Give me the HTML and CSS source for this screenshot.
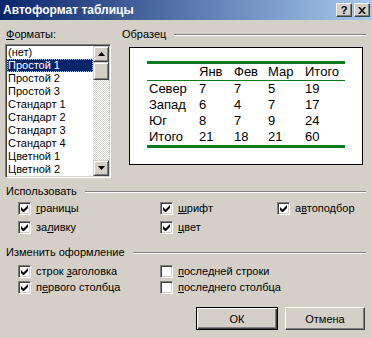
FILE: index.html
```html
<!DOCTYPE html>
<html lang="ru">
<head>
    <meta charset="UTF-8" />
    <title>Автоформат таблицы</title>
    <link rel="stylesheet" href="styles.css">
</head>
<body>
    <div class="dialog">
        <div class="titlebar">
            <span class="title">Автоформат таблицы</span>
            <span class="tb-buttons">
                <span class="tb-btn">?</span>
                <span class="tb-btn">
                    <svg width="8" height="7" viewBox="0 0 8 7"><path d="M0 0h2l2 2.5L6 0h2L5 3.5 8 7H6L4 4.5 2 7H0l3-3.5z" fill="#000"/></svg>
                </span>
            </span>
        </div>

        <div class="content">
            <div class="top">
                <div class="formats">
                    <div class="label"><u>Ф</u>орматы:</div>
                    <div class="listbox">
                        <ul class="items">
                            <li>(нет)</li>
                            <li class="selected">Простой 1</li>
                            <li>Простой 2</li>
                            <li>Простой 3</li>
                            <li>Стандарт 1</li>
                            <li>Стандарт 2</li>
                            <li>Стандарт 3</li>
                            <li>Стандарт 4</li>
                            <li>Цветной 1</li>
                            <li>Цветной 2</li>
                        </ul>
                        <div class="scrollbar">
                            <div class="sb-btn">
                                <svg width="7" height="4" viewBox="0 0 7 4"><path d="M3.5 0L7 4H0z" fill="#000"/></svg>
                            </div>
                            <div class="sb-btn sb-thumb"></div>
                            <div class="sb-track"></div>
                            <div class="sb-btn">
                                <svg width="7" height="4" viewBox="0 0 7 4"><path d="M0 0h7L3.5 4z" fill="#000"/></svg>
                            </div>
                        </div>
                    </div>
                </div>

                <div class="sample">
                    <div class="group-head">Образец</div>
                    <div class="preview">
                        <table class="demo">
                            <tr class="head"><td></td><td>Янв</td><td>Фев</td><td>Мар</td><td>Итого</td></tr>
                            <tr><td>Север</td><td>7</td><td>7</td><td>5</td><td>19</td></tr>
                            <tr><td>Запад</td><td>6</td><td>4</td><td>7</td><td>17</td></tr>
                            <tr><td>Юг</td><td>8</td><td>7</td><td>9</td><td>24</td></tr>
                            <tr class="last"><td>Итого</td><td>21</td><td>18</td><td>21</td><td>60</td></tr>
                        </table>
                    </div>
                </div>
            </div>

            <div class="group">
                <div class="group-head">Использовать</div>
                <div class="checks use">
                    <label class="check"><span class="box on"></span><span><u>г</u>раницы</span></label>
                    <label class="check"><span class="box on"></span><span><u>ш</u>рифт</span></label>
                    <label class="check"><span class="box on"></span><span>а<u>в</u>топодбор</span></label>
                    <label class="check"><span class="box on"></span><span>за<u>л</u>ивку</span></label>
                    <label class="check"><span class="box on"></span><span><u>ц</u>вет</span></label>
                </div>
            </div>

            <div class="group second">
                <div class="group-head">Изменить оформление</div>
                <div class="checks change">
                    <label class="check"><span class="box on"></span><span>строк <u>з</u>аголовка</span></label>
                    <label class="check"><span class="box"></span><span><u>п</u>оследней строки</span></label>
                    <label class="check"><span class="box on"></span><span>п<u>е</u>рвого столбца</span></label>
                    <label class="check"><span class="box"></span><span><u>п</u>оследнего столбца</span></label>
                </div>
            </div>

            <div class="actions">
                <button class="btn default">ОК</button>
                <button class="btn">Отмена</button>
            </div>
        </div>
    </div>
</body>
</html>
```

FILE: styles.css
```css
body {
    margin: 0;
    padding: 0;
    background: #d4d0c8;
    font-family: "Liberation Sans", Arial, sans-serif;
    font-size: 11px;
    color: #000;
}

.dialog {
    width: 372px;
    height: 338px;
    overflow: hidden;
}

.titlebar {
    height: 20px;
    display: flex;
    align-items: center;
    justify-content: space-between;
    padding: 0 2px 0 3px;
    background: linear-gradient(to right, #0a246a, #a6caf0);
}

.title {
    color: #fff;
    font-weight: bold;
    font-size: 12px;
}

.tb-buttons {
    display: flex;
    gap: 2px;
}

.tb-btn {
    width: 14px;
    height: 12px;
    display: flex;
    align-items: center;
    justify-content: center;
    background: #d4d0c8;
    border: 1px solid;
    border-color: #fff #404040 #404040 #fff;
    box-shadow: inset -1px -1px #808080;
    font-weight: bold;
    font-size: 11px;
    line-height: 12px;
}

.content {
    padding: 8px 6px 0 5px;
}

.top {
    display: flex;
}

.label {
    padding-left: 1px;
    line-height: 13px;
}

.formats {
    width: 106px;
}

.listbox {
    margin-top: 3px;
    display: flex;
    background: #fff;
    border: 1px solid;
    border-color: #808080 #fff #fff #808080;
    box-shadow: inset 1px 1px #404040, inset -1px -1px #d4d0c8;
    padding: 1px;
}

.items {
    list-style: none;
    margin: 0;
    padding: 0;
    flex: 1;
}

.items li {
    height: 13px;
    line-height: 13px;
    padding-left: 1px;
    white-space: nowrap;
}

.items li.selected {
    background: #0a246a;
    color: #fff;
    outline: 1px dotted #a6caf0;
    outline-offset: -1px;
}

.scrollbar {
    width: 16px;
    display: flex;
    flex-direction: column;
}

.sb-btn {
    height: 14px;
    display: flex;
    align-items: center;
    justify-content: center;
    background: #d4d0c8;
    border: 1px solid;
    border-color: #d4d0c8 #404040 #404040 #d4d0c8;
    box-shadow: inset 1px 1px #fff, inset -1px -1px #808080;
}

.sb-thumb {
    height: 16px;
}

.sb-track {
    flex: 1;
    background: conic-gradient(#d4d0c8 25%, #fff 0 50%, #d4d0c8 0 75%, #fff 0);
    background-size: 2px 2px;
}

.sample {
    flex: 1;
    margin-left: 10px;
}

.group-head {
    display: flex;
    align-items: center;
    gap: 8px;
    line-height: 13px;
    padding-left: 1px;
}

.group-head::after {
    content: "";
    flex: 1;
    border-top: 1px solid #808080;
    border-bottom: 1px solid #fff;
}

.preview {
    margin: 6px 3px 0 8px;
    background: #fff;
    border: 1px solid #000;
    display: flex;
    justify-content: center;
    align-items: flex-start;
    padding-top: 13px;
    box-sizing: border-box;
    height: 118px;
}

.demo {
    border-collapse: collapse;
    font-size: 13px;
    border-top: 3px solid #0e7a1e;
    border-bottom: 3px solid #0e7a1e;
}

.demo td {
    padding: 0 2px;
    height: 16px;
    line-height: 16px;
    text-align: left;
}

.demo td:nth-child(1) { width: 46px; }
.demo td:nth-child(2) { width: 31px; }
.demo td:nth-child(3) { width: 30px; }
.demo td:nth-child(4) { width: 33px; }
.demo td:nth-child(5) { width: 38px; }

.demo tr.head td {
    border-bottom: 1px solid #0e7a1e;
}

.group {
    margin-top: 7px;
}

.group.second {
    margin-top: 12px;
}

.checks {
    display: grid;
    padding-left: 13px;
    grid-template-columns: 142px 117px 1fr;
    margin-top: 4px;
    row-gap: 6px;
}

.checks.change {
    grid-template-columns: 142px 1fr;
    margin-top: 6px;
    row-gap: 3px;
}

.check {
    display: flex;
    align-items: center;
    gap: 5px;
    height: 13px;
    line-height: 13px;
    white-space: nowrap;
}

.box {
    width: 13px;
    height: 13px;
    box-sizing: border-box;
    background: #fff;
    border: 1px solid;
    border-color: #808080 #fff #fff #808080;
    box-shadow: inset 1px 1px #404040, inset -1px -1px #d4d0c8;
}

.box.on {
    background: #fff url("data:image/svg+xml,%3Csvg xmlns='http://www.w3.org/2000/svg' width='7' height='7'%3E%3Cpath d='M0 2v3l2 2h1l4-4V0L2.5 4.5z' fill='%23000'/%3E%3C/svg%3E") no-repeat center;
}

.actions {
    display: flex;
    justify-content: flex-end;
    gap: 7px;
    margin-top: 13px;
    padding-right: 1px;
}

.btn {
    width: 80px;
    height: 23px;
    background: #d4d0c8;
    font-family: inherit;
    font-size: 11px;
    border: 1px solid;
    border-color: #fff #404040 #404040 #fff;
    box-shadow: inset -1px -1px #808080;
    padding: 0;
}

.btn.default {
    border: 1px solid #000;
    box-shadow: inset 1px 1px #fff, inset -1px -1px #404040, inset -2px -2px #808080;
    width: 82px;
}
```
